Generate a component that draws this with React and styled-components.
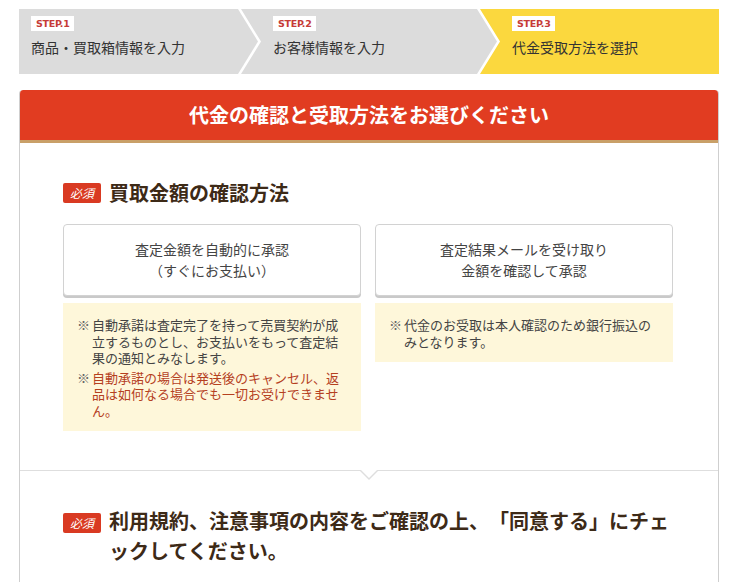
import React from "react";
import styled, { createGlobalStyle } from "styled-components";

const GlobalStyle = createGlobalStyle`
  body {
    margin: 0;
    background: #fff;
    font-family: "Noto Sans CJK JP", "Noto Sans", sans-serif;
    color: #333;
  }
`;

const steps = [
  { no: "STEP.1", label: "商品・買取箱情報を入力", width: 239 },
  { no: "STEP.2", label: "お客様情報を入力", width: 256 },
  { no: "STEP.3", label: "代金受取方法を選択", width: 239, active: true },
];

const ARROW = 20;

const clipFor = (first, last) => {
  const left = first ? "0 100%, 0 0" : `0 100%, ${ARROW}px 50%, 0 0`;
  const right = last
    ? "100% 0, 100% 100%"
    : `calc(100% - ${ARROW}px) 0, 100% 50%, calc(100% - ${ARROW}px) 100%`;
  return `polygon(${left}, ${right})`;
};

export default function App() {
  return (
    <>
      <GlobalStyle />
      <Page>
        <StepBar>
          {steps.map((s, i) => (
            <Step
              key={s.no}
              $width={s.width}
              $first={i === 0}
              $last={i === steps.length - 1}
              $active={s.active}
            >
              <StepNo>{s.no}</StepNo>
              <StepLabel>{s.label}</StepLabel>
            </Step>
          ))}
        </StepBar>

        <Card>
          <CardHeader>代金の確認と受取方法をお選びください</CardHeader>

          <Section $bottom={39}>
            <Heading>
              <Required>必須</Required>
              <HeadingText>買取金額の確認方法</HeadingText>
            </Heading>
            <Options>
              <Column>
                <Option>
                  査定金額を自動的に承認
                  <br />
                  （すぐにお支払い）
                </Option>
                <Note>
                  <NoteLine>
                    <Mark>※</Mark>
                    <span>自動承諾は査定完了を持って売買契約が成立するものとし、お支払いをもって査定結果の通知とみなします。</span>
                  </NoteLine>
                  <NoteLine $warn>
                    <Mark>※</Mark>
                    <span>自動承諾の場合は発送後のキャンセル、返品は如何なる場合でも一切お受けできません。</span>
                  </NoteLine>
                </Note>
              </Column>
              <Column>
                <Option>
                  査定結果メールを受け取り
                  <br />
                  金額を確認して承認
                </Option>
                <Note>
                  <NoteLine>
                    <Mark>※</Mark>
                    <span>代金のお受取は本人確認のため銀行振込のみとなります。</span>
                  </NoteLine>
                </Note>
              </Column>
            </Options>
          </Section>

          <Divider />

          <Section $bottom={40}>
            <Heading $top>
              <Required $offset={7}>必須</Required>
              <HeadingText>
                利用規約、注意事項の内容をご確認の上、「同意する」にチェックしてください。
              </HeadingText>
            </Heading>
          </Section>
        </Card>
      </Page>
    </>
  );
}

const Page = styled.div`
  width: 700px;
  padding: 9px 22px 0 19px;
`;

const StepBar = styled.div`
  display: flex;
  height: 65px;
`;

const Step = styled.div`
  flex: none;
  width: ${({ $width }) => $width}px;
  margin-left: ${({ $first }) => ($first ? 0 : -(ARROW - 3))}px;
  padding: 7px 0 0 ${({ $first }) => ($first ? 12 : ARROW + 12)}px;
  box-sizing: border-box;
  background: ${({ $active }) => ($active ? "#fbd83e" : "#dcdcdc")};
  clip-path: ${({ $first, $last }) => clipFor($first, $last)};
`;

const StepNo = styled.div`
  width: fit-content;
  background: #fff;
  color: #c63b37;
  font-family: "DejaVu Sans", sans-serif;
  font-weight: 700;
  font-size: 9.5px;
  line-height: 15px;
  padding: 0 5px;
  letter-spacing: -0.3px;
`;

const StepLabel = styled.div`
  margin-top: 6px;
  font-size: 14px;
  line-height: 20px;
  color: #333;
`;

const Card = styled.div`
  margin-top: 16px;
  border: 1px solid #cfcfcf;
  border-top: none;
  border-radius: 4px 4px 0 0;
  overflow: hidden;
  min-height: 520px;
`;

const CardHeader = styled.h1`
  margin: 0 -1px;
  height: 50px;
  background: #e13c21;
  border-bottom: 3px solid #c9a068;
  border-radius: 4px 4px 0 0;
  color: #fff;
  font-size: 20px;
  font-weight: 700;
  line-height: 50px;
  text-align: center;
`;

const Section = styled.section`
  padding: 35px 45px ${({ $bottom }) => $bottom}px 43px;
`;

const Heading = styled.div`
  display: flex;
  align-items: ${({ $top }) => ($top ? "flex-start" : "center")};
  gap: 8px;
`;

const Required = styled.span`
  flex: none;
  width: 38px;
  height: 20px;
  margin-top: ${({ $offset = 0 }) => $offset}px;
  background: #d93a22;
  border-radius: 2px;
  color: #fff;
  font-size: 12px;
  font-style: italic;
  line-height: 20px;
  text-align: center;
`;

const HeadingText = styled.h2`
  margin: 0;
  font-size: 20px;
  font-weight: 700;
  line-height: 30px;
  color: #3d2a17;
  text-spacing-trim: space-all;
`;

const Options = styled.div`
  display: grid;
  grid-template-columns: 1fr 1fr;
  gap: 14px;
  margin-top: 16px;
  align-items: start;
`;

const Column = styled.div`
  display: flex;
  flex-direction: column;
  gap: 7px;
`;

const Option = styled.button`
  height: 72px;
  border: 1px solid #d2d2d2;
  border-radius: 4px;
  background: #fff;
  box-shadow: 0 2px 0 #c9c9c9;
  font-family: inherit;
  font-size: 14px;
  line-height: 21px;
  color: #444;
  cursor: pointer;
`;

const Note = styled.div`
  background: #fef7da;
  padding: 14px 14px 12px;
  display: flex;
  flex-direction: column;
  gap: 3px;
`;

const NoteLine = styled.div`
  display: flex;
  font-size: 13px;
  line-height: 16.5px;
  color: ${({ $warn }) => ($warn ? "#b5401f" : "#444")};
`;

const Mark = styled.span`
  flex: none;
  width: 15px;
  color: #666;
`;

const Divider = styled.div`
  position: relative;
  border-top: 1px solid #dedede;
  &::before,
  &::after {
    content: "";
    position: absolute;
    left: 50%;
    transform: translateX(-50%);
    border-style: solid;
    border-color: transparent;
  }
  &::before {
    top: 0;
    border-width: 9px 9px 0;
    border-top-color: #dedede;
  }
  &::after {
    top: -1px;
    border-width: 8px 8px 0;
    border-top-color: #fff;
  }
`;
